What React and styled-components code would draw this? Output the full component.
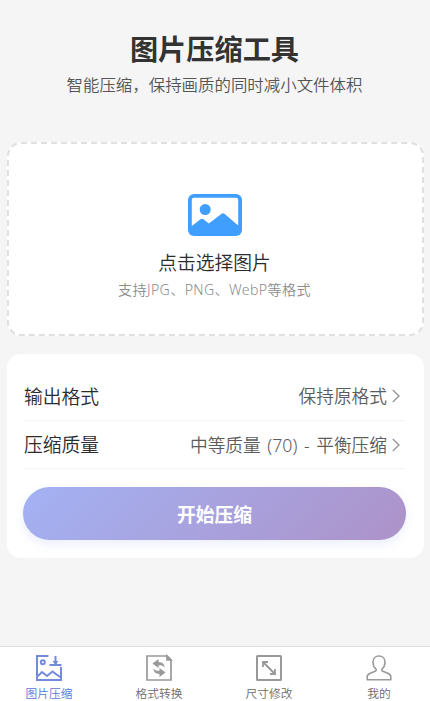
import React, { useState } from "react"
import styled, { createGlobalStyle } from "styled-components"

const GlobalStyle = createGlobalStyle`
  * {
    box-sizing: border-box;
  }
  body {
    margin: 0;
    background: #f5f5f5;
    font-family: "Noto Sans", "Noto Sans CJK SC", sans-serif;
    font-weight: 350;
  }
  h1, p {
    margin: 0;
  }
`
const Page = styled.div`
  width: 100%;
  height: 701px;
  display: flex;
  flex-direction: column;
  background: #f5f5f5;
  overflow: hidden;
`
const Content = styled.main`
  flex: 1;
  padding: 29px 6px 0 7px;
`
const Header = styled.header`
  height: 113px;
  padding-right: 2px;
  text-align: center;
`
const Title = styled.h1`
  font-size: 28.2px;
  line-height: 40px;
  font-weight: 700;
  color: #333;
`
const Subtitle = styled.p`
  font-size: 16.45px;
  line-height: 24px;
  margin-top: 4px;
  color: #555;
`
const UploadBox = styled.div`
  height: 194px;
  padding: 50px 2px 0 0;
  display: flex;
  flex-direction: column;
  align-items: center;
  background: #fff;
  border: 2px dashed #e0e0e0;
  border-radius: 14px;
  cursor: pointer;

  svg {
    display: block;
  }
`
const UploadText = styled.p`
  font-size: 18.8px;
  line-height: 28px;
  margin-top: 13px;
  color: #2c2c2c;
`
const UploadHint = styled.p`
  font-size: 14.1px;
  line-height: 20px;
  margin-top: 3px;
  letter-spacing: 0.38px;
  color: #8c8c8c;
`
const Card = styled.section`
  height: 204px;
  margin-top: 18px;
  padding: 18px 18px 0 16px;
  background: #fff;
  border-radius: 14px;
`
const Row = styled.div`
  height: ${(props) => props.$height}px;
  display: flex;
  align-items: center;
  justify-content: space-between;
  margin: 0 1px;
  border-bottom: 1px solid #f3f3f3;
  cursor: pointer;
`
const RowLabel = styled.span`
  font-size: 18.8px;
  line-height: 28px;
  padding-top: 1px;
  color: #2c2c2c;
`
const RowValue = styled.span`
  display: flex;
  align-items: center;
  gap: 4px;
  margin-right: 4px;
  font-size: 17.7px;
  line-height: 28px;
  word-spacing: 2px;
  color: #5c5c5c;
`
const StartBtn = styled.button`
  display: block;
  width: 383px;
  height: 53px;
  margin-top: 18px;
  padding: 0;
  border: none;
  border-radius: 27px;
  background: linear-gradient(135deg, #a3b2f4 0%, #ad92c8 100%);
  box-shadow: 0 4px 10px rgba(102, 126, 234, 0.13);
  color: #fff;
  font-family: inherit;
  font-size: 18.8px;
  font-weight: 700;
`
const TabBar = styled.nav`
  height: 55px;
  display: flex;
  background: #fff;
  border-top: 1px solid #dedede;
`
const Tabs = styled.div`
  flex: 1;
  display: flex;
  margin: 0 -4px 0 -6px;
`
const Tab = styled.div`
  flex: 1;
  padding-top: 7px;
  display: flex;
  flex-direction: column;
  align-items: center;
  color: ${(props) => (props.$active ? "#5a72d8" : "#6c6c6c")};
  cursor: pointer;

  svg {
    display: block;
    flex-shrink: 0;
    color: ${(props) => (props.$active ? "#748add" : "#999")};
  }
  span {
    font-size: 11.75px;
    line-height: 16px;
    margin-top: 3px;
    white-space: nowrap;
  }
`

const PictureIcon = () => (
  <svg width="54" height="42" viewBox="0 0 54 42">
    <rect width="54" height="42" rx="6" fill="#409eff" />
    <path d="M6 3.800h42a2.200 2.200 0 0 1 2.200 2.200v25.500L37 20.200q-2-1.800-4 0L20.800 29.600l-5.300-4.300q-1.500-1.200-3 0L3.800 32V6A2.200 2.200 0 0 1 6 3.800z" fill="#fff" />
    <circle cx="17.200" cy="15.500" r="5.500" fill="#409eff" />
  </svg>
)

const Arrow = () => (
  <svg width="10" height="14" viewBox="0 0 10 14" fill="none" stroke="#999" strokeWidth="1.4">
    <path d="M1.800 1L8 7L1.800 13" />
  </svg>
)

const CompressIcon = () => (
  <svg width="28" height="28" viewBox="0 0 28 28" fill="none" stroke="currentColor" strokeWidth="2">
    <path d="M13.500 2H2v24h24V13" />
    <circle cx="7.800" cy="8.300" r="2" />
    <path d="M3 22l4-4 5 4L17.500 17.500l4 3 4.500 3" />
    <path d="M20.500 2v8M14.500 11h12" />
    <path d="M17.500 7h6l-3 4z" fill="currentColor" stroke="none" />
  </svg>
)

const ConvertIcon = () => (
  <svg width="28" height="28" viewBox="0 0 28 28" fill="none" stroke="currentColor" strokeWidth="1.700">
    <path d="M2 2h20l4 4v20H2z" />
    <path d="M22 2v4h4z" fill="currentColor" />
    <path d="M7.500 9.500L13.500 5v3c4 .3 6 2 6 5.500-1.500-2-3-2.500-6-2.300V14z" fill="currentColor" stroke="none" />
    <path d="M20.500 18.500L14.500 23v-3c-4-.3-6-2-6-5.500 1.500 2 3 2.500 6 2.300V14z" fill="currentColor" stroke="none" />
  </svg>
)

const ResizeIcon = () => (
  <svg width="28" height="28" viewBox="0 0 28 28" fill="none" stroke="currentColor" strokeWidth="2">
    <rect x="2" y="2" width="24" height="24" rx=".5" />
    <path d="M8.500 8.500l11 11" />
    <path d="M8 13V8h5M20 15v5h-5" strokeWidth="1.800" />
  </svg>
)

const UserIcon = () => (
  <svg width="28" height="28" viewBox="0 0 28 28" fill="none" stroke="currentColor" strokeWidth="1.600" strokeLinejoin="round">
    <path d="M14 2c-3.700 0-6 2.500-6 6.100 0 3 1.100 5.300 2.800 6.700.8.800.3 2-.7 2.400l-5.400 2.200c-1.800.8-2.500 1.800-2.500 3.500v2.900h23.600v-2.900c0-1.700-.7-2.700-2.500-3.500l-5.400-2.200c-1-.4-1.500-1.600-.7-2.400C18.900 13.400 20 11.100 20 8.100c0-3.600-2.300-6.100-6-6.100z" />
  </svg>
)

const options = [
  { label: "输出格式", value: "保持原格式", height: 49 },
  { label: "压缩质量", value: "中等质量 (70) - 平衡压缩", height: 48 },
]

const tabs = [
  { text: "图片压缩", Icon: CompressIcon },
  { text: "格式转换", Icon: ConvertIcon },
  { text: "尺寸修改", Icon: ResizeIcon },
  { text: "我的", Icon: UserIcon },
]

export default function App() {
  const [current, setCurrent] = useState(0)

  return (
    <Page>
      <GlobalStyle />
      <Content>
        <Header>
          <Title>图片压缩工具</Title>
          <Subtitle>智能压缩，保持画质的同时减小文件体积</Subtitle>
        </Header>

        <UploadBox>
          <PictureIcon />
          <UploadText>点击选择图片</UploadText>
          <UploadHint>支持JPG、PNG、WebP等格式</UploadHint>
        </UploadBox>

        <Card>
          {options.map((el) => (
            <Row key={el.label} $height={el.height}>
              <RowLabel>{el.label}</RowLabel>
              <RowValue>
                {el.value}
                <Arrow />
              </RowValue>
            </Row>
          ))}
          <StartBtn>开始压缩</StartBtn>
        </Card>
      </Content>

      <TabBar>
        <Tabs>
          {tabs.map(({ text, Icon }, idx) => (
            <Tab key={text} $active={idx === current} onClick={() => setCurrent(idx)}>
              <Icon />
              <span>{text}</span>
            </Tab>
          ))}
        </Tabs>
      </TabBar>
    </Page>
  )
}
